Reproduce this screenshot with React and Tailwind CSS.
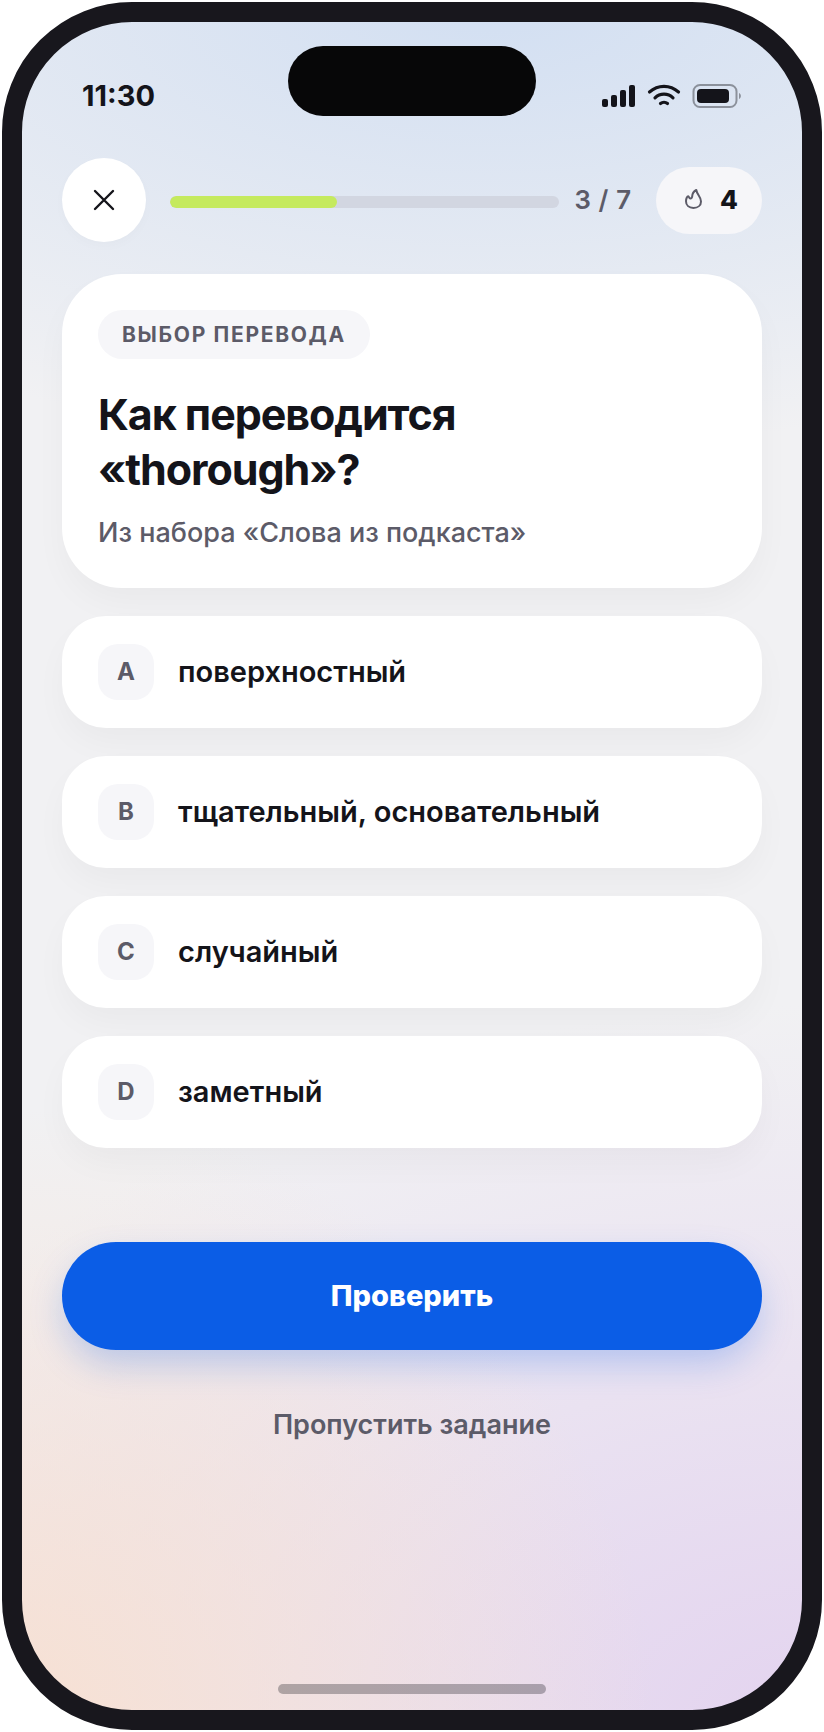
import React, { useState } from 'react';

const OPTIONS = [
  { key: 'A', label: 'поверхностный' },
  { key: 'B', label: 'тщательный, основательный' },
  { key: 'C', label: 'случайный' },
  { key: 'D', label: 'заметный' },
];

const STEP = 3;
const TOTAL = 7;

function StatusBar() {
  return (
    <div className="relative flex h-[136px] items-center justify-between px-[60px] pt-3">
      <span className="text-[29px] leading-9 font-bold">11:30</span>
      <div className="absolute top-6 left-1/2 h-[70px] w-[248px] -translate-x-1/2 rounded-full bg-[#070708]" />
      <svg width="140" height="26" viewBox="0 0 140 26" fill="none" aria-hidden="true">
        <g fill="#14141a">
          <rect x="0" y="16" width="6" height="8" rx="2" />
          <rect x="9" y="12" width="6" height="12" rx="2" />
          <rect x="18" y="7" width="6" height="17" rx="2" />
          <rect x="27" y="2" width="6" height="22" rx="2" />
        </g>
        <g stroke="#14141a" strokeWidth="3.2" strokeLinecap="round">
          <path d="M47.500 9C56 1.500 68 1.500 76.500 9" />
          <path d="M53 14.800C58 10 66 10 71 14.800" />
          <path d="M58.500 20.500C60.500 18.800 63.500 18.800 65.500 20.500" />
        </g>
        <rect x="91.500" y="2" width="43" height="22" rx="6.500" stroke="#14141a" strokeOpacity="0.4" strokeWidth="2" />
        <rect x="95" y="6" width="32" height="14" rx="4" fill="#14141a" />
        <path d="M137 10c2.500 1 2.500 5 0 6z" fill="#14141a" fillOpacity="0.4" />
      </svg>
    </div>
  );
}

function LessonHeader() {
  return (
    <header className="flex items-center gap-6">
      <button
        type="button"
        aria-label="Закрыть"
        className="flex size-[84px] shrink-0 items-center justify-center rounded-full bg-white shadow-[0_4px_12px_rgba(20,20,26,0.02)]"
      >
        <svg width="24" height="24" viewBox="0 0 24 24" stroke="#14141a" strokeWidth="2.4" strokeLinecap="round">
          <path d="M3 3l18 18M21 3L3 21" />
        </svg>
      </button>
      <div className="flex flex-1 items-center gap-4">
        <div className="mt-1 h-3 flex-1 overflow-hidden rounded-full bg-[#d2d6e1]">
          <div
            className="h-full rounded-full bg-[#c5ea5e]"
            style={{ width: `${(STEP / TOTAL) * 100}%` }}
          />
        </div>
        <span className="text-[26px] leading-9 font-semibold whitespace-nowrap text-[#5c5b68] tabular-nums">
          {STEP} / {TOTAL}
        </span>
      </div>
      <div className="flex h-[67px] shrink-0 items-center gap-3 rounded-full bg-[#f6f6f9] px-6">
        <svg width="28" height="28" viewBox="0 0 28 28" fill="none" stroke="#5c5b68" strokeWidth="2" strokeLinejoin="round">
          <path d="M16.300 4C13.500 5.500 12.300 7.500 12.200 10.300C12 12.500 10.300 13 9.400 11.800C8.900 11.200 8.800 10.400 8.200 10.300C7.200 10.300 6 12.600 6 15.200C6 19.300 9 21.900 13.400 21.900C18 21.900 21 19.300 21 15.400C21 10.500 17 9 16.300 4Z" />
        </svg>
        <span className="text-[26px] leading-9 font-extrabold">4</span>
      </div>
    </header>
  );
}

function QuestionCard() {
  return (
    <section className="mt-8 rounded-[60px] bg-white p-9 shadow-[0_16px_36px_-4px_rgba(20,20,26,0.04)]">
      <span className="inline-flex h-[49px] items-center rounded-full bg-[#f6f6f9] px-6 text-[21px] font-bold tracking-[0.08em] text-[#5c5b68] uppercase">
        Выбор перевода
      </span>
      <h1 className="mt-7 text-[43px] leading-[55px] font-bold tracking-tight">
        Как переводится
        <br />
        «thorough»?
      </h1>
      <p className="mt-4 text-[27px] leading-[39px] font-medium text-[#5c5b68]">
        Из набора «Слова из подкаста»
      </p>
    </section>
  );
}

function Option({ option, selected, onSelect }) {
  return (
    <button
      type="button"
      aria-pressed={selected}
      onClick={onSelect}
      className="flex h-28 w-full items-center gap-6 rounded-[44px] bg-white px-9 text-left shadow-[0_16px_36px_-4px_rgba(20,20,26,0.04)]"
    >
      <span className="flex size-14 items-center justify-center rounded-[20px] bg-[#f6f6f9] text-2xl font-bold text-[#5c5b68]">
        {option.key}
      </span>
      <span className="text-[29px] leading-9 font-semibold">{option.label}</span>
    </button>
  );
}

function App() {
  const [selected, setSelected] = useState(null);

  return (
    <div className="min-h-screen bg-white p-0.5 font-['Inter','Noto_Sans',sans-serif] text-[#14141a]">
      <div className="flex min-h-[calc(100vh-4px)] flex-col rounded-[130px] border-[20px] border-[#18171d] bg-[radial-gradient(120%_26%_at_60%_0%,#d2dff2_0%,#d2dff200_100%),radial-gradient(80%_36%_at_0%_100%,#f7e0d2_0%,#f7e0d200_100%),radial-gradient(130%_42%_at_100%_100%,#e3d3ef_0%,#e3d3ef00_100%)] bg-[#f1f1f3] bg-origin-border">
        <StatusBar />
        <main className="flex flex-1 flex-col px-10">
          <LessonHeader />
          <QuestionCard />
          <div className="mt-7 flex flex-col gap-7">
            {OPTIONS.map((option) => (
              <Option
                key={option.key}
                option={option}
                selected={selected === option.key}
                onSelect={() => setSelected(option.key)}
              />
            ))}
          </div>
          <button
            type="button"
            className="mt-[94px] h-[108px] w-full rounded-full bg-[#0b5de6] text-[29px] font-extrabold text-white shadow-[0_16px_36px_-4px_rgba(11,93,230,0.26)]"
          >
            Проверить
          </button>
          <button
            type="button"
            className="mt-10 h-[70px] w-full text-[27px] font-semibold text-[#5c5b68]"
          >
            Пропустить задание
          </button>
        </main>
        {/* Home indicator */}
        <div className="mb-4 h-2.5 w-[268px] self-center rounded-full bg-[#14141a]/30" />
      </div>
    </div>
  );
}

export default App;
